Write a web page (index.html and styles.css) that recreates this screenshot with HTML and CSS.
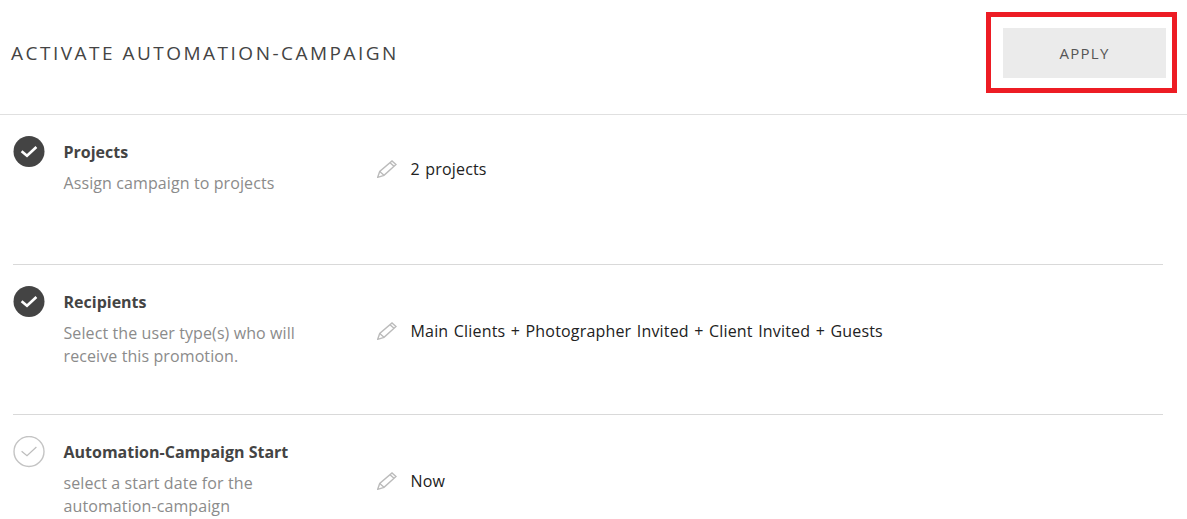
FILE: index.html
```html
<!DOCTYPE html>
<html lang="en">
<head>
<meta charset="utf-8">
<title>Activate Automation-Campaign</title>
<link rel="stylesheet" href="styles.css">
</head>
<body>
<header class="header">
  <h1 class="title">ACTIVATE AUTOMATION-CAMPAIGN</h1>
  <button class="apply" type="button">APPLY</button>
  <div class="highlight"></div>
</header>
<main class="steps">
  <section class="step">
    <svg class="status" viewBox="0 0 32 32" aria-hidden="true"><circle cx="16" cy="15.5" r="15.5" fill="#444"/><path d="M8.6 15.2l5.4 4.6 9.4-8.8" fill="none" stroke="#fff" stroke-width="2.6"/></svg>
    <div class="info">
      <h2 class="name">Projects</h2>
      <p class="desc">Assign campaign to projects</p>
    </div>
    <div class="value value-a">
      <svg class="pencil" viewBox="0 0 20 18" aria-hidden="true"><path d="M.7 17.3l2-5.8L15 1l4 3.5L7 15.3zM2.7 11.5L7 15.3M13 2.7l4 3.6" fill="none" stroke="#bbb" stroke-width="1.4"/></svg>
      <span class="text">2 projects</span>
    </div>
  </section>
  <section class="step">
    <svg class="status" viewBox="0 0 32 32" aria-hidden="true"><circle cx="16" cy="15.5" r="15.5" fill="#444"/><path d="M8.6 15.2l5.4 4.6 9.4-8.8" fill="none" stroke="#fff" stroke-width="2.6"/></svg>
    <div class="info">
      <h2 class="name">Recipients</h2>
      <p class="desc">Select the user type(s) who will<br>receive this promotion.</p>
    </div>
    <div class="value value-b">
      <svg class="pencil" viewBox="0 0 20 18" aria-hidden="true"><path d="M.7 17.3l2-5.8L15 1l4 3.5L7 15.3zM2.7 11.5L7 15.3M13 2.7l4 3.6" fill="none" stroke="#bbb" stroke-width="1.4"/></svg>
      <span class="text">Main Clients + Photographer Invited + Client Invited + Guests</span>
    </div>
  </section>
  <section class="step">
    <svg class="status" viewBox="0 0 32 32" aria-hidden="true"><circle cx="16" cy="15.5" r="15" fill="#fff" stroke="#c4c4c4" stroke-width="1.4"/><path d="M8.6 15.2l5.4 4.6 9.4-8.8" fill="none" stroke="#bdbdbd" stroke-width="1.2"/></svg>
    <div class="info">
      <h2 class="name">Automation-Campaign Start</h2>
      <p class="desc">select a start date for the<br>automation-campaign</p>
    </div>
    <div class="value value-b">
      <svg class="pencil" viewBox="0 0 20 18" aria-hidden="true"><path d="M.7 17.3l2-5.8L15 1l4 3.5L7 15.3zM2.7 11.5L7 15.3M13 2.7l4 3.6" fill="none" stroke="#bbb" stroke-width="1.4"/></svg>
      <span class="text">Now</span>
    </div>
  </section>
</main>
</body>
</html>
```
FILE: styles.css
```css
html, body { margin: 0; padding: 0; }
body {
  background: #fff;
  font-family: "Open Sans", "Liberation Sans", sans-serif;
}
.header {
  position: relative;
  box-sizing: border-box;
  height: 115px;
  padding: 28px 21px 0 11px;
  border-bottom: 1px solid #e0e0e0;
  display: flex;
  justify-content: space-between;
  align-items: flex-start;
}
.title {
  margin: 0;
  font-size: 19px;
  line-height: 50px;
  font-weight: 400;
  letter-spacing: 2.49px;
  color: #444;
}
.apply {
  width: 163px;
  height: 50px;
  border: 0;
  padding: 0;
  background: #ebebeb;
  font-family: inherit;
  font-size: 15px;
  letter-spacing: 1.3px;
  color: #555;
}
.highlight {
  position: absolute;
  left: 986px;
  top: 12px;
  width: 181px;
  height: 71px;
  border: 5px solid #ed1c24;
}
.steps { margin: 0 24px 0 13px; }
.step {
  box-sizing: border-box;
  height: 150px;
  padding-top: 21px;
  border-bottom: 1px solid #d9d9d9;
  display: flex;
  align-items: flex-start;
}
.step:last-child { height: auto; border-bottom: 0; }
.status { width: 32px; height: 32px; flex: none; }
.info { width: 313px; margin-left: 18.5px; flex: none; }
.name {
  margin: 6px 0 0;
  font-size: 16px;
  line-height: 20px;
  font-weight: 700;
  color: #444;
}
.desc {
  margin: 10px 0 0;
  font-size: 16px;
  line-height: 23px;
  letter-spacing: 0.1px;
  color: #8b8b8b;
}
.value {
  display: flex;
  align-items: center;
  margin-left: 0.5px;
  color: #222;
}
.value-a { margin-top: 22px; }
.value-b { margin-top: 34px; }
.pencil { width: 20px; height: 18px; flex: none; }
.text {
  margin-left: 13.5px;
  font-size: 16px;
  line-height: 22px;
  letter-spacing: 0.18px;
  word-spacing: 1.1px;
}
```
